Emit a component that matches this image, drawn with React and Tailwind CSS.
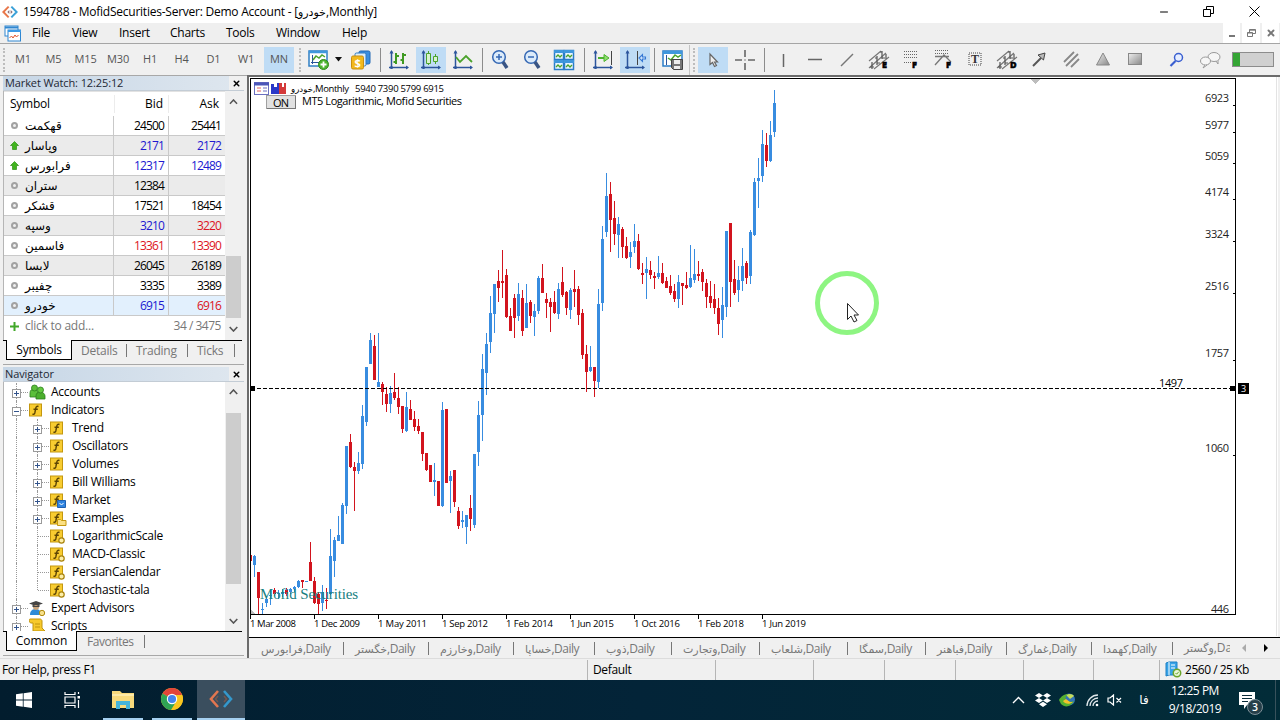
import { Minus, X } from 'lucide-react';

const TIMEFRAMES = [
  ['M1', 'w-[30px]'], ['M5', 'w-[31px]'], ['M15', 'w-[33px]'], ['M30', 'w-8'], ['H1', 'w-8'],
  ['H4', 'w-[31px]'], ['D1', 'w-[33px]'], ['W1', 'w-8'],
];

const MENU = [
  ['File', 'w-10'], ['View', 'w-[47px]'], ['Insert', 'w-[51px]'], ['Charts', 'w-[56px]'],
  ['Tools', 'w-[50px]'], ['Window', 'w-[66px]'], ['Help', 'w-10'],
];

const SYMBOLS = [
  { name: 'قهکمت', bid: '24500', ask: '25441' },
  { name: 'وپاسار', bid: '2171', ask: '2172', up: true, bidColor: 'text-[#2018d0]', askColor: 'text-[#2018d0]' },
  { name: 'فرابورس', bid: '12317', ask: '12489', up: true, bidColor: 'text-[#2018d0]', askColor: 'text-[#2018d0]' },
  { name: 'ستران', bid: '12384', ask: '' },
  { name: 'قشکر', bid: '17521', ask: '18454' },
  { name: 'وسپه', bid: '3210', ask: '3220', bidColor: 'text-[#2018d0]', askColor: 'text-[#dc1424]' },
  { name: 'فاسمین', bid: '13361', ask: '13390', bidColor: 'text-[#dc1424]', askColor: 'text-[#dc1424]' },
  { name: 'لابسا', bid: '26045', ask: '26189' },
  { name: 'چفیبر', bid: '3335', ask: '3389' },
  { name: 'خودرو', bid: '6915', ask: '6916', bidColor: 'text-[#2018d0]', askColor: 'text-[#dc1424]', selected: true },
];

const TREE = [
  { label: 'Accounts', icon: 'accounts', level: 0, sign: '+' },
  { label: 'Indicators', icon: 'f', level: 0, sign: '-' },
  { label: 'Trend', icon: 'f', level: 1, sign: '+' },
  { label: 'Oscillators', icon: 'f', level: 1, sign: '+' },
  { label: 'Volumes', icon: 'f', level: 1, sign: '+' },
  { label: 'Bill Williams', icon: 'f', level: 1, sign: '+' },
  { label: 'Market', icon: 'f', badge: 'market', level: 1, sign: '+' },
  { label: 'Examples', icon: 'f', badge: 'folder', level: 1, sign: '+' },
  { label: 'LogarithmicScale', icon: 'f', badge: 'dot', level: 1 },
  { label: 'MACD-Classic', icon: 'f', badge: 'dot', level: 1 },
  { label: 'PersianCalendar', icon: 'f', badge: 'dot', level: 1 },
  { label: 'Stochastic-tala', icon: 'f', badge: 'dot', level: 1, last: true },
  { label: 'Expert Advisors', icon: 'expert', level: 0, sign: '+' },
  { label: 'Scripts', icon: 'script', level: 0, sign: '+' },
];

const CHART_TABS = [
  ['فرابورس', 'w-[95px]'], ['خگستر', 'w-[85px]'], ['وخارزم', 'w-[85px]'], ['خساپا', 'w-[81px]'],
  ['ذوب', 'w-[77px]'], ['وتجارت', 'w-[88px]'], ['شلعاب', 'w-[88px]'], ['سمگا', 'w-[78px]'],
  ['فباهنر', 'w-[81px]'], ['غمارگ', 'w-[85px]'], ['کهمدا', 'w-[81px]'],
];

const PRICES = [
  [6923, 98, 105], [5977, 125, 132], [5059, 156, 163], [4174, 192, 199], [3324, 234, 241],
  [2516, 286, 293], [1757, 353, 360], [1060, 448, 455],
];

const DATES = [
  '1 Mar 2008', '1 Dec 2009', '1 May 2011', '1 Sep 2012', '1 Feb 2014',
  '1 Jun 2015', '1 Oct 2016', '1 Feb 2018', '1 Jun 2019',
];
const DATE_WIDTHS = [46, 46, 49, 46, 47, 44, 46, 46, 44];

// [direction, high, body top, body bottom, low], one bar every 4px
const CANDLES = [
  ['r', 554, 555, 561, 562], ['b', 555, 556, 565, 577], ['r', 572, 572, 598, 614], ['b', 603, 609, 610, 614],
  ['b', 597, 599, 603, 607], ['b', 590, 595, 596, 605], ['r', 588, 590, 594, 596], ['b', 590, 593, 594, 599],
  ['b', 589, 592, 594, 597], ['r', 588, 590, 594, 596], ['b', 588, 589, 592, 594], ['b', 586, 587, 589, 592],
  ['b', 580, 581, 587, 588], ['r', 580, 580, 582, 588], ['b', 581, 581, 582, 582], ['r', 542, 562, 581, 581],
  ['r', 577, 581, 603, 604], ['r', 592, 594, 604, 614], ['b', 585, 592, 603, 611], ['r', 588, 600, 601, 609],
  ['b', 529, 556, 594, 595], ['b', 537, 540, 561, 577], ['b', 516, 535, 541, 541], ['b', 503, 505, 544, 544],
  ['b', 446, 446, 506, 514], ['r', 434, 442, 467, 468], ['r', 462, 467, 471, 511], ['b', 452, 463, 471, 474],
  ['b', 405, 416, 464, 469], ['b', 367, 367, 422, 426], ['b', 333, 340, 364, 364], ['r', 335, 346, 380, 380],
  ['b', 333, 382, 387, 387], ['r', 382, 384, 392, 405], ['r', 387, 394, 404, 412], ['b', 386, 393, 404, 413],
  ['r', 373, 392, 398, 400], ['r', 387, 398, 407, 414], ['r', 406, 406, 429, 433], ['b', 392, 407, 431, 432],
  ['r', 400, 409, 420, 420], ['r', 411, 419, 427, 431], ['r', 419, 426, 431, 434], ['r', 432, 432, 454, 461],
  ['r', 453, 453, 470, 471], ['r', 465, 465, 482, 482], ['b', 463, 480, 482, 496], ['r', 481, 481, 506, 506],
  ['b', 402, 410, 506, 507], ['r', 409, 409, 483, 483], ['b', 471, 476, 481, 513], ['r', 470, 470, 502, 507],
  ['r', 507, 511, 526, 529], ['b', 511, 520, 522, 528], ['b', 515, 515, 527, 544], ['r', 495, 508, 519, 531],
  ['b', 454, 454, 525, 528], ['b', 401, 415, 452, 466], ['b', 354, 369, 415, 441], ['b', 333, 344, 373, 395],
  ['b', 296, 313, 342, 353], ['b', 284, 284, 314, 333], ['r', 270, 281, 288, 302], ['r', 250, 281, 283, 298],
  ['r', 269, 275, 317, 318], ['r', 308, 316, 331, 331], ['r', 294, 298, 318, 338], ['b', 283, 294, 316, 321],
  ['r', 290, 298, 331, 336], ['b', 284, 303, 328, 328], ['r', 300, 302, 316, 323], ['b', 304, 311, 317, 336],
  ['b', 276, 278, 311, 314], ['r', 264, 278, 293, 293], ['r', 293, 299, 303, 318], ['r', 298, 302, 307, 332],
  ['r', 291, 302, 313, 314], ['b', 283, 289, 314, 319], ['r', 267, 282, 295, 297], ['r', 291, 292, 308, 315],
  ['b', 288, 290, 310, 319], ['r', 270, 289, 292, 307], ['r', 286, 289, 315, 325], ['r', 309, 313, 355, 359],
  ['r', 345, 354, 372, 392], ['b', 346, 367, 371, 372], ['r', 367, 367, 381, 397], ['b', 289, 304, 382, 388],
  ['b', 226, 239, 303, 311], ['b', 173, 196, 232, 237], ['r', 182, 194, 220, 252], ['r', 201, 218, 234, 245],
  ['b', 217, 224, 235, 258], ['r', 227, 229, 247, 258], ['r', 237, 246, 258, 259], ['b', 242, 252, 257, 268],
  ['b', 224, 241, 247, 253], ['r', 234, 241, 269, 270], ['r', 263, 273, 275, 284], ['b', 257, 269, 273, 299],
  ['r', 261, 270, 275, 279], ['r', 272, 276, 278, 289], ['b', 256, 273, 277, 279], ['r', 263, 273, 283, 284],
  ['r', 277, 281, 288, 288], ['r', 275, 286, 293, 295], ['r', 284, 291, 299, 302], ['b', 275, 282, 299, 308],
  ['r', 283, 283, 286, 305], ['r', 272, 285, 288, 289], ['b', 245, 278, 287, 288], ['b', 249, 274, 280, 283],
  ['r', 261, 274, 276, 281], ['r', 269, 272, 282, 291], ['r', 279, 283, 297, 308], ['r', 281, 296, 303, 308],
  ['r', 284, 299, 308, 314], ['r', 298, 308, 324, 335], ['b', 287, 305, 320, 338], ['b', 231, 231, 307, 317],
  ['r', 223, 223, 282, 307], ['r', 260, 279, 293, 295], ['b', 266, 280, 290, 302], ['b', 248, 266, 281, 291],
  ['r', 261, 263, 278, 284], ['b', 230, 232, 276, 284], ['b', 178, 182, 235, 236], ['b', 158, 178, 181, 208],
  ['b', 130, 144, 176, 182], ['r', 133, 145, 161, 167], ['b', 121, 135, 161, 162], ['b', 90, 103, 132, 137],
];

const Icon = ({ size = 22, children }) => (
  <svg width={size} height={size} viewBox={`0 0 ${size} ${size}`} fill="none" className="overflow-visible">{children}</svg>
);

const Tool = ({ active, children }) => (
  <div className="w-8 h-[26px] flex items-center justify-center shrink-0">
    <div className={`w-[30px] h-[26px] flex items-center justify-center ${active ? 'bg-[#bfdcf5]' : ''}`}>{children}</div>
  </div>
);

const Sep = () => (
  <div className="w-1.5 flex justify-center shrink-0"><div className="w-px h-6 bg-[#8c8c8c]" /></div>
);

const Grip = () => <div className="h-6 border-l-2 border-dotted border-[#bdbdbd] shrink-0" />;

const Axes = () => (
  <g stroke="#2c559c" fill="#2c559c">
    <path d="M3.5 2v17.500M1 18.500h19" strokeWidth="1.500" />
    <path d="M1.500 4.500l2-3.500 2 3.500zM18 16.500l3 2-3 2z" stroke="none" />
    <circle cx="3.500" cy="18.500" r="1.500" stroke="none" />
  </g>
);

const LogoMark = ({ size }) => (
  <svg width={size} height={size} viewBox="0 0 24 24" fill="none" strokeWidth="3">
    <path d="M10 4l-8 8 8 8" stroke="#e8774a" />
    <path d="M14 4l8 8-8 8" stroke="#3aa0d8" />
    <path d="M8 12l3-3v6zM16 12l-3-3v6z" fill="#8a6f78" />
  </svg>
);

const Letter = ({ x = 14, children }) => (
  <text x={x} y="19" fontSize="9" fontWeight="900" fill="#000" stroke="#000" strokeWidth=".5" fontFamily="Open Sans, sans-serif">{children}</text>
);

const Pitchfork = ({ letter }) => (
  <Icon>
    <path d="M1 19L18 4M6 20L21 8M1 12L13 2" stroke="#777" strokeWidth="1.200" />
    <path d="M4 13v7M2 18h4M9 7v9M7 9h2M9 14h3M14 2v8M12 3h2M14 9h3M18 5v5" stroke="#555" strokeWidth="1.200" />
    <Letter>{letter}</Letter>
  </Icon>
);

function TitleBar() {
  return (
    <div className="h-[23px] bg-white flex items-center">
      <div className="ml-[2px] w-4"><LogoMark size={16} /></div>
      <span className="ml-[5px] text-[12px] tracking-[-0.020em]">
        1594788 - MofidSecurities-Server: Demo Account - [<span className="text-[11px]">خودرو</span>,Monthly]
      </span>
      <div className="ml-auto flex items-center mr-[20px] gap-[35px]">
        <Minus size={12} strokeWidth={2} className="-mr-[2px]" />
        <svg width="11" height="11" viewBox="0 0 11 11" fill="none" stroke="#000">
          <path d="M.5 3.500h7v7h-7zM3.500 3.500v-3h7v7h-3" />
        </svg>
        <svg width="11" height="11" viewBox="0 0 11 11" fill="none" stroke="#000"><path d="M.5.5l10 10M10.500.5l-10 10" /></svg>
      </div>
    </div>
  );
}

function MenuBar() {
  return (
    <div className="h-[21px] bg-[#efefef] border-b border-[#a5a5a5] flex items-center">
      <svg className="ml-1" width="17" height="17" viewBox="0 0 17 17" fill="none">
        <rect x="1" y="1" width="13" height="10" fill="#fff" stroke="#2f86d0" /><path d="M1 2.500h13" stroke="#2f86d0" strokeWidth="2" />
        <rect x="4" y="5" width="12.500" height="11" fill="#fff" stroke="#2f86d0" /><path d="M4 6h13" stroke="#3c9be6" strokeWidth="2" />
        <path d="M5.500 13l2-2 1.500 2 2-3 1.500 2 2-2" stroke="#e0552c" />
      </svg>
      <div className="ml-[11px] flex text-[12px] tracking-[-0.020em]">
        {MENU.map(([label, w]) => <span key={label} className={w}>{label}</span>)}
      </div>
      <div className="ml-auto mr-[1px] flex self-stretch items-stretch gap-[2px] text-[#777]">
        <div className="w-[17px] bg-white flex items-end justify-center pb-[6px]"><div className="w-[6px] h-[2px] bg-[#777]" /></div>
        <div className="w-[18px] bg-white flex items-center justify-center">
          <svg width="9" height="8" viewBox="0 0 9 8" fill="none" stroke="#777"><path d="M.5 3.500h5v4h-5zM2.500 3V.5h6v4h-3M2.500 1.200h6M.5 4h5" /></svg>
        </div>
        <div className="w-[17px] bg-white flex items-center justify-center"><X size={10} strokeWidth={4.500} /></div>
      </div>
    </div>
  );
}

function Toolbar() {
  return (
    <div className="h-[31px] bg-[#f0f0f0] flex items-center">
      <div className="w-2 pl-[3px]"><Grip /></div>
      <div className="flex text-[11px] text-[#555] tracking-[-0.010em]">
        {TIMEFRAMES.map(([label, w]) => <span key={label} className={`${w} text-center`}>{label}</span>)}
      </div>
      <div className="ml-[2px] w-[30px] h-[26px] bg-[#bfdcf5] text-[11px] text-[#555] flex items-center justify-center">MN</div>
      <div className="w-[9px] pl-[5px]"><Grip /></div>
      <Tool>
        <Icon>
          <rect x="1" y="2" width="18" height="15" fill="#fff" stroke="#2f7fc4" strokeWidth="1.500" />
          <path d="M1 3h18" stroke="#3f97dc" strokeWidth="2.500" />
          <path d="M4.500 6v9M3 13.500h8" stroke="#2c559c" />
          <path d="M5 11l3-4 3 2 3-3 3 2" stroke="#4ba32c" strokeWidth="1.500" />
          <circle cx="15.500" cy="15.500" r="5" fill="#4db32e" stroke="#2e8a1c" /><path d="M15.500 12.500v6M12.500 15.500h6" stroke="#fff" strokeWidth="1.800" />
        </Icon>
      </Tool>
      <div className="w-[10px] flex justify-start">
        <svg width="7" height="5" viewBox="0 0 7 5"><path d="M0 0h7l-3.500 4.500z" fill="#111" /></svg>
      </div>
      <Tool>
        <Icon>
          <rect x="9" y="2" width="11" height="13" rx="1.500" fill="#3b8ede" stroke="#2368b4" />
          <rect x="5" y="4" width="11" height="13" rx="1.500" fill="#dceefb" stroke="#2e79c2" />
          <rect x="1.500" y="7" width="12" height="13" rx="1.500" fill="#f2b91e" stroke="#c98f10" />
          <text x="4.600" y="17.500" fontSize="11" fontWeight="700" fill="#fff" fontFamily="Open Sans, sans-serif">$</text>
        </Icon>
      </Tool>
      <Sep />
      <Tool><Icon><Axes /><path d="M8 4v11M5.500 13h2.500M8 7h3M15 4v11M12.500 11h2.500M15 6h3" stroke="#3f9a22" strokeWidth="2" /></Icon></Tool>
      <Tool active><Icon><Axes /><path d="M8.500 2v14M15.500 5v10" stroke="#4ba32c" /><path d="M6.500 4.500h4v10h-4zM13.500 7.500h4v5h-4z" fill="#d9f2cf" stroke="#4ba32c" /></Icon></Tool>
      <Tool><Icon><Axes /><path d="M4 8l4 5 6-6 6 6" stroke="#4ba32c" strokeWidth="1.800" /></Icon></Tool>
      <Sep />
      <Tool><Icon><circle cx="9" cy="8" r="6.300" fill="#dcebfa" stroke="#3568b4" strokeWidth="1.500" /><path d="M9 5v6M6 8h6" stroke="#3568b4" strokeWidth="1.500" /><path d="M13 13l4 6" stroke="#3a5585" strokeWidth="3.500" /></Icon></Tool>
      <Tool><Icon><circle cx="9" cy="8" r="6.300" fill="#dcebfa" stroke="#3568b4" strokeWidth="1.500" /><path d="M6 8h6" stroke="#3568b4" strokeWidth="1.500" /><path d="M13 13l4 6" stroke="#3a5585" strokeWidth="3.500" /></Icon></Tool>
      <Tool>
        <Icon>
          {[[0, 1], [10, 1], [0, 11], [10, 11]].map(([x, y]) => (
            <g key={`${x}-${y}`}>
              <rect x={x + 0.5} y={y + 0.5} width="9" height="9" fill="#e8f5ff" stroke="#2b7cc8" strokeWidth="1.500" />
              <path d={`M${x} ${y + 1.5}h10`} stroke="#3f97dc" strokeWidth="3" />
              <path d={`M${x + 2} ${y + 7}l2-2 2 2 2-2`} stroke="#4ba32c" strokeWidth="1.300" />
            </g>
          ))}
        </Icon>
      </Tool>
      <Sep />
      <Tool><Icon><Axes /><path d="M19.500 2v14" stroke="#444" /><path d="M6 9h7" stroke="#4db32e" strokeWidth="2" /><path d="M12 5.500l5 3.500-5 3.500z" fill="#8fdd70" stroke="#4db32e" /></Icon></Tool>
      <Tool active><Icon><Axes /><path d="M13.500 2v14" stroke="#444" /><path d="M21.500 8v2h-3v2.500L15 9l3.500-3.500V8z" stroke="#3578d4" fill="#cfe4fb" strokeWidth="1.100" /></Icon></Tool>
      <Sep />
      <Tool>
        <Icon>
          <rect x="1" y="2" width="19" height="15" fill="#fff" stroke="#2b7cc8" strokeWidth="1.500" /><path d="M1 3.500h19" stroke="#3f97dc" strokeWidth="3" />
          <path d="M4.500 6v10" stroke="#2c559c" /><path d="M6 9l3 2 4-5 3 2 3-2" stroke="#4ba32c" strokeWidth="1.500" />
          <path d="M9.500 10.500h11v10h-9l-2-2z" fill="#777" stroke="#444" /><path d="M12 11h6v4h-6zM12 17h6v3h-6z" fill="#eee" />
        </Icon>
      </Tool>
      <div className="w-[8px] flex items-center gap-[3px]"><div className="w-px h-[30px] bg-[#c4c4c4]" /><Grip /></div>
      <Tool active><svg width="11" height="16" viewBox="0 0 11 16" fill="none"><path d="M2 2v10.500l2.500-2 2 4 2-1-2-3.500h3z" fill="#eee" stroke="#666" strokeWidth="1.200" /></svg></Tool>
      <Tool><Icon size={20}><path d="M10 0v7M10 13v7M0 10h7M13 10h7M9.500 10h1" stroke="#666" strokeWidth="1.600" /></Icon></Tool>
      <Sep />
      <Tool><Icon size={20}><path d="M10.500 4v13" stroke="#666" strokeWidth="1.500" /></Icon></Tool>
      <Tool><Icon size={20}><path d="M3 9.500h14" stroke="#666" strokeWidth="1.500" /></Icon></Tool>
      <Tool><Icon size={20}><path d="M4 16L16 4" stroke="#777" strokeWidth="1.500" /></Icon></Tool>
      <Tool><Pitchfork letter="E" /></Tool>
      <Tool>
        <Icon>
          <path d="M4 2.500h14M4 5.500h14M4 8.500h14M4 13.500h7" stroke="#666" strokeDasharray="1 1" />
          <Letter x={12}>F</Letter>
        </Icon>
      </Tool>
      <Tool>
        <Icon>
          <path d="M3 1.500h14M3 4.500h14" stroke="#666" strokeDasharray="1 1" /><path d="M3 16L12 6l7 7M3 7.500h14" stroke="#777" strokeWidth="1.300" />
          <Letter>F</Letter>
        </Icon>
      </Tool>
      <Tool>
        <Icon>
          <rect x="5" y="4" width="12" height="12" stroke="#444" strokeDasharray="1 1" />
          <text x="7" y="14" fontSize="12" fill="#333" fontWeight="700" fontFamily="Liberation Serif, serif">T</text>
        </Icon>
      </Tool>
      <Tool><Pitchfork letter="D" /></Tool>
      <Tool><Icon><path d="M5 17l8-8" stroke="#555" strokeWidth="2" /><path d="M17 4l-1.500 7-5.500-5z" fill="#bbb" stroke="#444" /></Icon></Tool>
      <Tool><Icon><path d="M4 13L14 3M6 17L18 5M11 18l8-8" stroke="#888" strokeWidth="1.800" /></Icon></Tool>
      <Tool><Icon><path d="M11 4l6.500 12h-13z" fill="url(#shape)" stroke="#888" /></Icon></Tool>
      <Tool>
        <Icon>
          <defs><linearGradient id="shape" x1="0" y1="0" x2="1" y2="1"><stop stopColor="#eee" /><stop offset="1" stopColor="#888" /></linearGradient></defs>
          <rect x="4.500" y="4.500" width="13" height="11" fill="url(#shape)" stroke="#888" />
        </Icon>
      </Tool>
      <div className="w-[10px]" />
      <Tool><Icon><circle cx="12.500" cy="8.500" r="4" fill="#e6eeff" stroke="#3a5fd0" strokeWidth="1.500" /><path d="M9.500 12l-5 5" stroke="#3a5fd0" strokeWidth="2.200" /></Icon></Tool>
      <Tool>
        <Icon>
          <ellipse cx="16" cy="8" rx="6" ry="4.500" fill="#f6f6f6" stroke="#999" />
          <ellipse cx="7.500" cy="12" rx="5" ry="4" fill="#f6f6f6" stroke="#999" /><path d="M7 16l-2 3 4-3M18 12l2 3v-4" fill="#f6f6f6" stroke="#999" />
        </Icon>
      </Tool>
      <div className="ml-[7px] w-[42px] h-[15px] border border-[#8c8c8c] bg-[#d0d0d0] shrink-0"><div className="w-[7px] h-full bg-[#35a535]" /></div>
    </div>
  );
}

const PanelHeader = ({ title }) => (
  <div className="h-[15px] bg-linear-to-r from-[#c6d6e6] to-[#dfe7ef] border-b border-[#c3ccd5] flex items-center text-[11px] text-[#1d2733]">
    <span className="pl-[2px] tracking-[-0.010em]">{title}</span>
    <div className="ml-auto w-[15px] h-full bg-[#f0f0f0] flex items-center justify-center text-black"><X size={9} strokeWidth={4} /></div>
  </div>
);

const Chevron = ({ up }) => (
  <svg width="9" height="6" viewBox="0 0 9 6" fill="none" stroke="#555" strokeWidth="1.600">
    <path d={up ? 'M.7 5l3.800-4 3.800 4' : 'M.7 1l3.800 4 3.800-4'} />
  </svg>
);

function MarketWatch() {
  return (
    <section className="h-[291px]">
      <PanelHeader title="Market Watch: 12:25:12" />
      <div className="h-[249px] flex border-l border-[#b5b5b5]">
        <div className="w-[221px] bg-white text-[12px]">
          <div className="h-[25px] flex items-center border-t border-[#e2e2e2]">
            <span className="w-[110px] pl-[6px] tracking-[-0.020em]">Symbol</span>
            <span className="w-[54px] pr-[5px] text-right border-l border-[#ececec]">Bid</span>
            <span className="w-[57px] pr-[6px] text-right border-l border-[#ececec]">Ask</span>
          </div>
          {SYMBOLS.map((s, i) => (
            <div key={s.name} className={`h-5 flex border-b border-[#c9c9c9] leading-[19px] tracking-[-0.070em] ${s.selected ? 'bg-[#e2f0fd]' : i % 2 ? 'bg-[#ebebeb]' : 'bg-white'}`}>
              <div className="w-[109px] flex items-center">
                <div className="w-[21px] flex justify-center">
                  {s.up
                    ? <svg width="9" height="9" viewBox="0 0 9 9"><path d="M4.500.5l4 4h-2v4h-4v-4h-2z" fill="#41b41e" stroke="#2f8f14" strokeWidth=".7" /></svg>
                    : <div className="w-[7px] h-[7px] rounded-full border-2 border-[#a2a2a2] bg-[#f0f0f0]" />}
                </div>
                <span dir="rtl" className="text-[12px] tracking-normal">{s.name}</span>
              </div>
              <span className={`w-[55px] pr-[4px] text-right border-l border-[#c9c9c9] ${s.bidColor || ''}`}>{s.bid}</span>
              <span className={`w-[57px] pr-[4px] text-right border-l border-[#c9c9c9] ${s.askColor || ''}`}>{s.ask}</span>
            </div>
          ))}
          <div className="h-5 flex items-center text-[#777]">
            <svg className="ml-[6px]" width="9" height="9" viewBox="0 0 9 9"><path d="M4.500 0v9M0 4.500h9" stroke="#41a828" strokeWidth="2" /></svg>
            <span className="ml-[6px] tracking-[-0.020em]">click to add...</span>
            <span className="ml-auto pr-[4px] tracking-[-0.040em]">34 / 3475</span>
          </div>
        </div>
        <div className="w-4 bg-[#f0f0f0] flex flex-col items-center py-[8px]">
          <Chevron up />
          <div className="mt-[151px] w-[15px] h-[67px] bg-[#cdcdcd]" />
          <div className="mt-[8px]"><Chevron /></div>
        </div>
      </div>
      <div className="h-[20px] mr-[2px] border-t border-black flex text-[12px] text-[#777]">
        <div className="-mt-px ml-[3px] w-[66px] h-[20px] bg-white border-[1.500px] border-t-0 border-black text-black flex items-center justify-center tracking-[-0.020em]">Symbols</div>
        <div className="flex items-center h-[19px] tracking-[-0.020em]">
          <span className="w-[55px] pl-[9px] border-r border-[#777] leading-[13px]">Details</span>
          <span className="w-[61px] pl-[9px] border-r border-[#777] leading-[13px]">Trading</span>
          <span className="w-[47px] pl-[9px] border-r border-[#777] leading-[13px]">Ticks</span>
        </div>
      </div>
      <div className="h-[5px] border-b border-[#a8a8a8]" />
    </section>
  );
}

function TreeIcon({ icon, badge }) {
  if (icon === 'accounts') {
    return (
      <svg width="17" height="16" viewBox="0 0 17 16" stroke="#2b7d1c" strokeWidth=".8">
        <path d="M1 9c0-3 2-4 4-4s4 2 4 4v4H1z" fill="#5bbf3a" /><circle cx="5.500" cy="4" r="3" fill="#5bbf3a" />
        <path d="M7 12c0-3 2-4 4.500-4S16 10 16 12v3H7z" fill="#4aae2c" /><circle cx="11.500" cy="6" r="3" fill="#63c840" />
      </svg>
    );
  }
  if (icon === 'expert') {
    return (
      <svg width="17" height="17" viewBox="0 0 17 17">
        <path d="M1 15c0-5 3-6 6-6s5 2 5 6z" fill="#2c8ad8" /><circle cx="7" cy="7" r="3" fill="#caa57c" />
        <path d="M0 3.500L7 1l7 2.500L7 6zM3.500 5v2h7V5" fill="#444" /><circle cx="13" cy="13" r="2.700" fill="#f7e08a" stroke="#b08a10" />
      </svg>
    );
  }
  if (icon === 'script') {
    return (
      <svg width="17" height="16" viewBox="0 0 17 16" fill="#f7c92b" stroke="#c0940e">
        <path d="M1 1h10c1 0 2 1 2 2v7l3 3H4V5H2C0 5 0 1 1 1z" /><path d="M6 6h5M6 9h5" />
      </svg>
    );
  }
  return (
    <svg width="17" height="17" viewBox="0 0 17 17" className="overflow-visible">
      <rect x=".5" y="2" width="12" height="12" fill="#f8cc30" stroke="#c4970e" />
      <path d="M9.500 4.500c-2-.8-2.500.5-2.800 2L5.800 11c-.3 1.200-1 1.500-2.300 1M4.500 7.300h4.300" stroke="#5c4404" strokeWidth="1.400" fill="none" />
      {badge === 'market' && <g><path d="M7.500 8.500h8v7h-8z" fill="#2f84e0" stroke="#1f60b0" /><path d="M9.500 11l2 2 2-2" stroke="#fff" fill="none" /></g>}
      {badge === 'folder' && <path d="M7.500 9.500h3l1 1h4.500v5H7.500z" fill="#fbe083" stroke="#c4970e" />}
      {badge === 'dot' && <circle cx="11.500" cy="12.500" r="2.700" fill="#fdeea8" stroke="#a8820c" strokeWidth="1.200" />}
    </svg>
  );
}

const Toggle = ({ sign }) => (
  <svg width="9" height="9" viewBox="0 0 9 9" fill="#fff" stroke="#9a9a9a">
    <rect x=".5" y=".5" width="8" height="8" />
    <path d={sign === '+' ? 'M2 4.500h5M4.500 2v5' : 'M2 4.500h5'} stroke="#33548c" />
  </svg>
);

// Dotted connector cell, with the expand box centred on the line
const Branch = ({ sign, last, stub = true }) => (
  <div className="w-[21px] h-[18px] grid shrink-0">
    <div className={`col-start-1 row-start-1 ml-[8px] border-l border-dotted border-[#999] ${last ? 'h-[9px]' : 'h-[18px]'}`} />
    {stub && <div className="col-start-1 row-start-1 ml-[9px] mt-[9px] w-[11px] h-px border-t border-dotted border-[#999]" />}
    {sign && <div className="col-start-1 row-start-1 mt-[6px] ml-[4px]"><Toggle sign={sign} /></div>}
  </div>
);

function Navigator() {
  return (
    <section className="h-[290px]">
      <PanelHeader title="Navigator" />
      <div className="h-[249px] flex border-l border-[#b5b5b5]">
        <div className="w-[221px] bg-white overflow-hidden text-[12px] pt-[1px]">
          {TREE.map((n) => (
            <div key={n.label} className="h-[18px] flex items-center pl-[4px]">
              {n.level === 1 && <Branch stub={false} />}
              <Branch sign={n.sign} last={n.last} />
              <div className="w-[21px] shrink-0"><TreeIcon icon={n.icon} badge={n.badge} /></div>
              <span className="tracking-[-0.020em] leading-[18px] pl-[1px] whitespace-nowrap">{n.label}</span>
            </div>
          ))}
        </div>
        <div className="w-4 bg-[#f0f0f0] flex flex-col items-center py-[7px]">
          <Chevron up />
          <div className="mt-[18px] w-[15px] h-[174px] bg-[#cdcdcd]" />
          <div className="mt-[34px]"><Chevron /></div>
        </div>
      </div>
      <div className="h-[20px] mr-[2px] border-t border-black flex text-[12px] text-[#777]">
        <div className="-mt-px ml-[3px] w-[71px] h-[20px] bg-white border-[1.500px] border-t-0 border-black text-black flex items-center justify-center">Common</div>
        <div className="flex items-center h-[19px]"><span className="w-[68px] pl-[10px] border-r border-[#777] leading-[13px] tracking-[-0.040em]">Favorites</span></div>
      </div>
      <div className="h-[5px] border-b border-[#a8a8a8]" />
    </section>
  );
}

function Chart() {
  return (
    <svg width="1029" height="560" viewBox="249 77 1029 560" className="block" fontFamily="Open Sans, DejaVu Sans, sans-serif" shapeRendering="crispEdges">
      <rect x="249" y="77" width="1029" height="560" fill="#fff" />
      <defs><clipPath id="plot"><rect x="251" y="79" width="984" height="535" /></clipPath></defs>
      <g clipPath="url(#plot)">
        {CANDLES.map(([dir, high, top, bottom, low], i) => {
          const x = 250 + i * 4;
          return (
            <g key={i} fill={dir === 'b' ? '#388ce0' : '#d2141e'}>
              <rect x={x} y={high} width="1" height={Math.max(low - high, 1)} />
              <rect x={x - 1} y={top} width="3" height={Math.max(bottom - top, 1)} />
            </g>
          );
        })}
      </g>
      <text x="260" y="599" fontSize="15" fill="#178080" fontFamily="Liberation Serif, serif" textLength="98">Mofid Securities</text>
      <path d="M250.500 614.500V78.500H1235.500V614.500z" fill="none" stroke="#000" />
      <path d="M251 610l5 4h-5zM1030 79h10l-5 5z" fill="#bdbdbd" />
      <path d="M251 388.500H1235" stroke="#000" strokeDasharray="4 2" />
      <path d="M250 386h5v5h-5zM1230 386h5v5h-5zM1238 383h11v11h-11z" fill="#000" />
      <text x="1241" y="392" fontSize="9" fill="#fff">3</text>
      <text x="1159" y="387" fontSize="11" textLength="24">1497</text>
      {PRICES.map(([price, y, tick]) => (
        <g key={price}>
          <text x="1205" y={y + 4} fontSize="11" fill="#222" textLength="24">{price}</text>
          <path d={`M1233 ${tick}.5h3`} stroke="#000" />
        </g>
      ))}
      <text x="1211" y="613" fontSize="11" fill="#222" textLength="18">446</text>
      {DATES.map((date, i) => (
        <g key={date}>
          <path d={`M${250.5 + i * 64} 615v4`} stroke="#000" />
          <text x={250 + i * 64} y="627" fontSize="9.500" textLength={DATE_WIDTHS[i]}>{date}</text>
        </g>
      ))}
      <g shapeRendering="auto">
        <rect x="254.500" y="82.500" width="14" height="12" fill="#fff" stroke="#6a6fc0" /><path d="M254 84h15" stroke="#4a55b8" strokeWidth="3" />
        <path d="M257 88h4M257 91h4" stroke="#e06060" /><path d="M263 88h4M263 91h4" stroke="#6a6fc0" />
        <path d="M271 84h3v3h3v-4h3v11h-9z" fill="#2a38c8" /><path d="M279 83h3v4h2v-4h2v11h-7z" fill="#d43a3a" />
        <text x="291" y="92" fontSize="8.500" textLength="22" lengthAdjust="spacingAndGlyphs">خودرو</text>
        <text x="313" y="92" fontSize="9.500" textLength="36">,Monthly</text>
        <text x="355" y="92" fontSize="9.500" textLength="89">5940 7390 5799 6915</text>
        <rect x="266.500" y="95.500" width="29" height="13" fill="#e1e1e1" stroke="#a0a0a0" /><path d="M267 108.500h29M295.500 96v13" stroke="#777" />
        <text x="273" y="107" fontSize="11" textLength="16">ON</text>
        <text x="302" y="105" fontSize="11" textLength="160">MT5 Logarithmic, Mofid Securities</text>
        <circle cx="847" cy="303" r="29.500" fill="none" stroke="#8ef582" strokeWidth="5" />
        <path d="M847.500 303.500v16l3.500-3.500 3 6 3-1.500-3-5.500h4.500z" fill="#fff" stroke="#222" />
      </g>
      <path d="M1276.500 77v559" stroke="#e3e3e3" />
    </svg>
  );
}

function ChartTabs() {
  return (
    <div className="h-[21px] border-t border-black bg-[#f0f0f0] flex items-center text-[12px] text-[#777] overflow-hidden">
      {CHART_TABS.map(([name, w], i) => (
        <div key={name} className={`${w} border-r border-[#777] h-[13px] flex items-center shrink-0 ${i ? 'pl-[11px]' : 'pl-[12px]'} leading-[13px] tracking-[-0.040em]`}>
          <span className="text-[11px] tracking-normal">{name}</span><span>,Daily</span>
        </div>
      ))}
      <div className="w-[57px] pl-[11px] flex items-center overflow-hidden leading-[18px] shrink-0"><span className="text-[11px]">وگستر</span><span>,Daily</span></div>
      <svg className="ml-[11px]" width="28" height="8" viewBox="0 0 28 8"><path d="M5 0v8L1 4z" fill="#aaa" /><path d="M23 0v8l4-4z" fill="#000" /></svg>
    </div>
  );
}

function StatusBar() {
  return (
    <div className="h-[22px] bg-[#f0f0f0] border-t border-[#dcdcdc] flex items-center text-[12px]">
      <span className="w-[587px] pl-[2px] tracking-[-0.030em]">For Help, press F1</span>
      <span className="w-[128px] h-5 border-l border-[#b5b5b5] pl-[5px] leading-5 tracking-[-0.030em]">Default</span>
      <div className="w-[98px] h-5 border-l border-[#b5b5b5]" />
      <div className="w-[71px] h-5 border-l border-[#b5b5b5]" />
      <div className="w-[71px] h-5 border-l border-[#b5b5b5]" />
      <div className="w-[68px] h-5 border-l border-[#b5b5b5]" />
      <div className="w-[70px] h-5 border-l border-[#b5b5b5]" />
      <div className="w-[66px] h-5 border-l border-[#b5b5b5]" />
      <div className="h-5 border-l border-[#b5b5b5] flex items-center pl-[5px]">
        <svg width="17" height="17" viewBox="0 0 17 17" fill="none">
          <path d="M1 2l3-1h8v13H4l-3 1z" fill="#38a4e8" stroke="#1f80c4" /><path d="M4 1v13M6 4h4M6 7h4" stroke="#fff" />
          <circle cx="12" cy="12" r="3.700" fill="#eaf7d8" stroke="#6aa52a" strokeWidth="1.500" /><path d="M10.500 12l1.200 1.200 2-2.400" stroke="#6aa52a" />
        </svg>
        <span className="ml-[3px] tracking-[-0.040em]">2560 / 25 Kb</span>
      </div>
    </div>
  );
}

function Taskbar() {
  return (
    <div className="h-10 bg-linear-to-r from-[#021d2e] via-[#032438] to-[#022c38] flex items-center text-white">
      <div className="w-12 flex justify-center">
        <svg width="16" height="16" viewBox="0 0 16 16" fill="#fff"><path d="M0 2.300l6.800-1v6.300H0zM7.600 1.200L16 0v7.600H7.600zM0 8.400h6.800v6.300l-6.800-1zM7.600 8.400H16V16l-8.400-1.200z" /></svg>
      </div>
      <div className="w-12 flex justify-center">
        <svg width="17" height="16" viewBox="0 0 17 16" fill="none" stroke="#fff" strokeWidth="1.200"><path d="M1 0v2.500h10V0M1 5h10v6H1zM1 16v-2.500h10V16M14.500 0v2M14.500 8v8" /><path d="M13.500 4h2.500v2.500h-2.500z" fill="#fff" stroke="none" /></svg>
      </div>
      <div className="ml-[7px] w-10 h-10 flex flex-col items-center border-b-2 border-[#a5d0f0] justify-center">
        <svg width="22" height="19" viewBox="0 0 22 19"><path d="M0 1h8l2 2h12v15H0z" fill="#f8da7c" /><path d="M0 4h22v2H0z" fill="#fdeaa8" /><path d="M4 19v-8h14v8h-4v-4H8v4z" fill="#45b5dc" /></svg>
      </div>
      <div className="ml-[9px] w-10 h-10 flex items-center border-b-2 border-[#a5d0f0] justify-center">
        <svg width="22" height="22" viewBox="0 0 22 22">
          <circle cx="11" cy="11" r="11" fill="#f9c620" />
          <path d="M11 11L1.500 5.500A11 11 0 0 1 20.500 5.500z" fill="#e2453a" /><path d="M11 11L1.500 5.500A11 11 0 0 0 10 22l5.500-9z" fill="#2fa455" />
          <path d="M20.500 5.500H11v5.500h10" fill="#e2453a" /><path d="M11 7h10.200a11 11 0 0 1-10.700 15l5-8.500z" fill="#f9c620" />
          <circle cx="11" cy="11" r="5.200" fill="#fff" /><circle cx="11" cy="11" r="4.100" fill="#4484ee" />
        </svg>
      </div>
      <div className="ml-[5px] w-12 h-10 bg-[#3a4e5e] border-b-2 border-[#a5d0f0] flex items-center justify-center">
        <svg width="24" height="18" viewBox="0 0 24 18" fill="none" strokeWidth="2.600">
          <path d="M9 1L2 9l7 8" stroke="#e27650" /><path d="M15 1l7 8-7 8" stroke="#3498cc" /><path d="M9 6L6.500 9 9 12M15 6l2.500 3-2.500 3" stroke="#75564f" strokeWidth="1.500" />
        </svg>
      </div>
      <div className="ml-auto flex items-center">
        <svg width="13" height="8" viewBox="0 0 13 8" fill="none" stroke="#fff" strokeWidth="1.400"><path d="M1 7l5.500-5.500L12 7" /></svg>
        <svg className="ml-[10px]" width="16" height="14" viewBox="0 0 16 14" fill="#fff"><path d="M4 0l4 2.500L4 5 0 2.500zM12 0l4 2.500L12 5 8 2.500zM4 5l4 2.500L4 10 0 7.500zM12 5l4 2.500-4 2.500-4-2.500zM8 8.800l4 2.500L8 14l-4-2.700z" /></svg>
        <svg className="ml-[8px]" width="16" height="14" viewBox="0 0 16 14">
          <circle cx="10" cy="6.500" r="6" fill="#3474b8" /><path d="M7 2c3-2 7-1 8 1l-4 3z" fill="#c5dc5a" />
          <path d="M0 7c2-4 6-6 9-6-2 2-3 4-2 6 3 2 6 2 8 1-3 6-9 7-13 3z" fill="#55b030" /><path d="M4 8c2 3 6 4 10 1l-3 0-4-3z" fill="#f2c12d" />
        </svg>
        <svg className="ml-[11px]" width="13" height="13" viewBox="0 0 13 13" fill="none" stroke="#dfe7ea" strokeWidth="1.300"><path d="M1 12A11 11 0 0 1 12 1M4 12a8 8 0 0 1 8-8M7 12a5 5 0 0 1 5-5" /><circle cx="11" cy="11" r="1.300" fill="#fff" stroke="none" /></svg>
        <svg className="ml-[8px]" width="15" height="12" viewBox="0 0 15 12" fill="none" stroke="#fff" strokeWidth="1.200"><path d="M1 4h2l3.500-3v10L3 8H1zM9.500 4l4.500 4.500M14 4L9.500 8.500" /></svg>
        <span className="w-[28px] ml-[8px] text-center text-[12px]">فا</span>
        <div className="ml-[7px] w-[60px] text-center text-[12px] leading-[18px] tracking-[-0.040em]"><div>12:25 PM</div><div>9/18/2019</div></div>
        <svg className="ml-[13px] mt-[3px] overflow-visible" width="26" height="26" viewBox="0 0 26 26">
          <path d="M1 3h16v13H9l-3 4v-4H1z" fill="#fff" /><path d="M4 6.500h10M4 9.500h10M4 12.500h6" stroke="#0a2c3a" />
          <circle cx="17" cy="18" r="7.500" fill="#263f4a" stroke="#7d8f97" /><text x="14" y="22" fontSize="10.500" fontWeight="600" fill="#fff">3</text>
        </svg>
        <div className="ml-[11px] w-px h-10 bg-[#38525c] mr-1" />
      </div>
    </div>
  );
}

export default function App() {
  return (
    <div className="w-[1280px] h-[720px] overflow-hidden bg-[#f0f0f0] flex flex-col text-black font-['Open_Sans','DejaVu_Sans',sans-serif] whitespace-nowrap">
      <TitleBar />
      <MenuBar />
      <Toolbar />
      <div className="h-[583px] flex">
        <div className="w-[247px] pl-[3px] pr-[3px] border-t border-[#a8a8a8]">
          <MarketWatch />
          <Navigator />
        </div>
        <div className="w-[1033px] border-l-2 border-t-2 border-[#6b6b6b]">
          <Chart />
          <ChartTabs />
        </div>
      </div>
      <StatusBar />
      <Taskbar />
    </div>
  );
}
